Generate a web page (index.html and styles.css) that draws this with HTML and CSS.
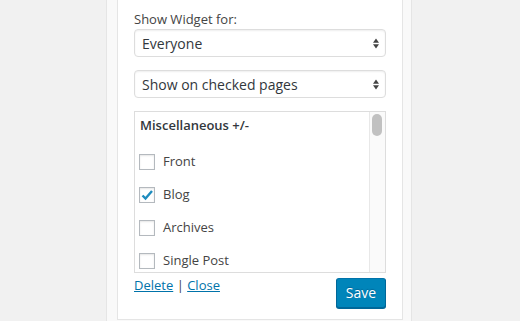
FILE: index.html
```html
<!DOCTYPE html>
<html lang="en">
<head>
    <meta charset="UTF-8">
    <meta name="viewport" content="width=device-width, initial-scale=1.0">
    <title>Widget Visibility</title>
    <link rel="stylesheet" href="styles.css">
</head>
<body>
    <div class="sidebar">
        <div class="widget">
            <label class="field-label" for="showFor">Show Widget for:</label>
            <select id="showFor" class="field-select">
                <option>Everyone</option>
                <option>Logged in users</option>
                <option>Logged out users</option>
            </select>

            <select class="field-select">
                <option>Show on checked pages</option>
                <option>Hide on checked pages</option>
            </select>

            <div class="page-list">
                <div class="page-list-body">
                    <div class="page-list-title">Miscellaneous +/-</div>
                    <label class="page-item">
                        <input type="checkbox">
                        <span>Front</span>
                    </label>
                    <label class="page-item">
                        <input type="checkbox" checked>
                        <span>Blog</span>
                    </label>
                    <label class="page-item">
                        <input type="checkbox">
                        <span>Archives</span>
                    </label>
                    <label class="page-item">
                        <input type="checkbox">
                        <span>Single Post</span>
                    </label>
                </div>
                <div class="list-scrollbar">
                    <div class="list-thumb"></div>
                </div>
            </div>

            <div class="widget-footer">
                <div class="widget-links">
                    <a href="#">Delete</a> | <a href="#">Close</a>
                </div>
                <button class="button-primary">Save</button>
            </div>
        </div>
    </div>
</body>
</html>
```

FILE: styles.css
```css
* {
    box-sizing: border-box;
}

html,
body {
    height: 100%;
    overflow: hidden;
}

body {
    margin: 0;
    background: #f1f1f1;
    font-family: "Open Sans", "Liberation Sans", sans-serif;
    font-size: 13px;
    color: #444;
}

.sidebar {
    width: 306px;
    min-height: 100%;
    margin-left: 106px;
    padding: 0 8px 0 10px;
    background: #f9f9f9;
    border-left: 1px solid #e5e5e5;
    border-right: 1px solid #e5e5e5;
}

.widget {
    width: 286px;
    padding: 10px 16px 11px 16px;
    background: #fff;
    border: 1px solid #e5e5e5;
    border-top: none;
}

.field-label {
    display: block;
    line-height: 18px;
    margin-bottom: 1px;
    color: #444;
}

.field-select {
    display: block;
    width: 100%;
    height: 28px;
    margin: 0 0 13px 0;
    padding: 0 24px 0 7px;
    font-family: inherit;
    font-size: 14px;
    color: #32373c;
    background: #fff url("data:image/svg+xml;utf8,<svg xmlns='http://www.w3.org/2000/svg' width='6' height='11' viewBox='0 0 6 11'><path d='M0 4.7 L3 0.5 L6 4.7Z M0 6.3 L3 10.5 L6 6.3Z' fill='%23444'/></svg>") no-repeat right 6px center;
    border: 1px solid #ddd;
    border-radius: 4px;
    box-shadow: inset 0 1px 2px rgba(0, 0, 0, 0.07);
    appearance: none;
    -webkit-appearance: none;
    outline: none;
}

/* checked pages box */
.page-list {
    display: flex;
    height: 162px;
    border: 1px solid #ddd;
    background: #fff;
    overflow: hidden;
}

.page-list-body {
    flex: 1;
    padding: 4px 0 0 5px;
    overflow: hidden;
}

.page-list-title {
    font-weight: 600;
    line-height: 18px;
    margin-bottom: 12px;
    color: #32373c;
}

.page-item {
    display: flex;
    align-items: flex-start;
    height: 33px;
    cursor: pointer;
}

.page-item span {
    margin-top: 6px;
    line-height: 18px;
    color: #444;
}

.page-item input {
    flex: none;
    width: 16px;
    height: 16px;
    margin: 8px 8px 0 -1px;
    background: #fff;
    border: 1px solid #b4b9be;
    border-radius: 0;
    box-shadow: inset 0 1px 2px rgba(0, 0, 0, 0.1);
    appearance: none;
    -webkit-appearance: none;
    outline: none;
}

.page-item input:checked {
    background: #fff url("data:image/svg+xml;utf8,<svg xmlns='http://www.w3.org/2000/svg' width='14' height='14' viewBox='0 0 14 14'><path d='M2.5 7.5 L5.5 10.5 L12 3' fill='none' stroke='%231e8cbe' stroke-width='2.4'/></svg>") no-repeat center;
}

.list-scrollbar {
    flex: none;
    width: 16px;
    padding: 2px 0 0 2px;
    background: #fafafa;
    border-left: 1px solid #e8e8e8;
}

.list-thumb {
    width: 10px;
    height: 22px;
    border-radius: 5px;
    background: #c1c1c1;
}

.widget-footer {
    display: flex;
    justify-content: space-between;
    align-items: flex-start;
    margin-top: 5px;
}

.widget-links {
    line-height: 14px;
    color: #444;
}

.widget-links a {
    color: #0073aa;
    text-decoration: underline;
}

.button-primary {
    width: 50px;
    height: 30px;
    padding: 0;
    font-family: inherit;
    font-size: 14px;
    line-height: 28px;
    color: #fff;
    background: #0085ba;
    border: 1px solid #0073aa;
    border-color: #0073aa #006799 #006799;
    border-radius: 3px;
    box-shadow: 0 1px 0 #006799;
    text-shadow: 0 -1px 1px #006799;
    cursor: pointer;
}
```
